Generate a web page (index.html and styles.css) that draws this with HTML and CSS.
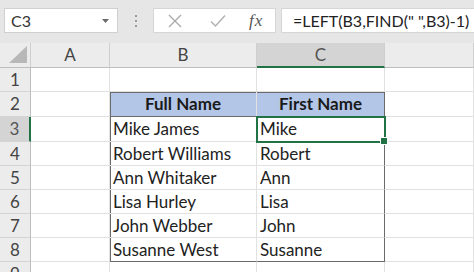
FILE: index.html
```html
<!DOCTYPE html>
<html>
    <head>
        <meta charset="utf-8">
        <title>LEFT + FIND</title>
        <link rel="stylesheet" href="styles.css">
    </head>
    <body>
        <!-- 编辑栏 -->
        <div class="bar">
            <div class="namebox">
                <span>C3</span>
                <svg class="drop" width="7" height="4" viewBox="0 0 7 4"><path d="M0 0h7L3.5 4z" fill="#6b6b6b"/></svg>
            </div>
            <div class="grip"><i></i><i></i><i></i></div>
            <div class="btns">
                <svg width="14" height="14" viewBox="0 0 14 14"><path d="M1 1l12 12M13 1L1 13" stroke="#a8a8a8" stroke-width="1.3" fill="none"/></svg>
                <svg width="16" height="14" viewBox="0 0 16 14"><path d="M1 7.5l4.5 4.5L15 1.5" stroke="#b0b0b0" stroke-width="1.4" fill="none"/></svg>
                <em class="fx">fx</em>
            </div>
            <div class="formula">=LEFT(B3,FIND(" ",B3)-1)</div>
        </div>

        <!-- 表格 -->
        <div class="sheet">
            <div class="hd corner"><svg width="18" height="17" viewBox="0 0 18 17"><path d="M18 0V17H0z" fill="#b8b8b8"/></svg></div>
            <div class="hd">A</div>
            <div class="hd">B</div>
            <div class="hd on-col">C</div>
            <div class="hd"></div>

            <div class="rh">1</div><div class="c"></div><div class="c"></div><div class="c"></div><div class="c"></div>

            <div class="rh">2</div><div class="c"></div>
            <div class="c th tl">Full Name</div>
            <div class="c th tr">First Name</div><div class="c"></div>

            <div class="rh on-row">3</div><div class="c"></div>
            <div class="c tl">Mike James</div>
            <div class="c tr sel">Mike</div><div class="c"></div>

            <div class="rh">4</div><div class="c"></div>
            <div class="c tl">Robert Williams</div>
            <div class="c tr">Robert</div><div class="c"></div>

            <div class="rh">5</div><div class="c"></div>
            <div class="c tl">Ann Whitaker</div>
            <div class="c tr">Ann</div><div class="c"></div>

            <div class="rh">6</div><div class="c"></div>
            <div class="c tl">Lisa Hurley</div>
            <div class="c tr">Lisa</div><div class="c"></div>

            <div class="rh">7</div><div class="c"></div>
            <div class="c tl">John Webber</div>
            <div class="c tr">John</div><div class="c"></div>

            <div class="rh">8</div><div class="c"></div>
            <div class="c tl tb">Susanne West</div>
            <div class="c tr tb">Susanne</div><div class="c"></div>

            <div class="rh">9</div><div class="c"></div><div class="c"></div><div class="c"></div><div class="c"></div>
        </div>
    </body>
</html>
```

FILE: styles.css
```css
*{
    margin: 0;
    padding: 0;
    box-sizing: border-box;
}
body{
    width: 474px;
    height: 272px;
    overflow: hidden;
    background: #fff;
    font-family: Lato, "Liberation Sans", sans-serif;
    color: #222;
}

/* 编辑栏 */
.bar{
    height: 43px;
    background: #e6e6e6;
    display: flex;
    align-items: flex-start;
    padding: 8px 0 0 4px;
}
.namebox{
    width: 114px;
    height: 25px;
    background: #fff;
    border: 1px solid #d0d0d0;
    display: flex;
    align-items: center;
    justify-content: space-between;
    padding: 0 8px 0 6px;
    font-size: 16px;
    color: #333;
}
.grip{
    width: 35px;
    height: 25px;
    display: flex;
    flex-direction: column;
    align-items: center;
    justify-content: center;
    gap: 3px;
}
.grip i{
    width: 2px;
    height: 2px;
    background: #9a9a9a;
}
.btns{
    width: 123px;
    height: 25px;
    background: #fff;
    border: 1px solid #d6d6d6;
    display: flex;
    align-items: center;
    padding: 0 0 0 14px;
}
.btns svg:nth-child(2){
    margin-left: 28px;
}
.fx{
    margin-left: 23px;
    font: italic 17px "Liberation Serif", serif;
    color: #555;
    letter-spacing: 1px;
}
.formula{
    flex: 1;
    margin-left: 5px;
    height: 25px;
    background: #fff;
    border: 1px solid #d6d6d6;
    border-right: none;
    padding-left: 11px;
    font-size: 16px;
    line-height: 23px;
    color: #222;
    white-space: nowrap;
}

/* 网格 */
.sheet{
    display: grid;
    grid-template-columns: 31px 79px 147px 128px 1fr;
    grid-template-rows: 25px 24px 25px 25px 24px 24px 24px 24px 24px 24px;
}
.hd{
    background: #ececec;
    border-right: 1px solid #cfcfcf;
    border-bottom: 1px solid #bdbdbd;
    text-align: center;
    font-size: 17px;
    line-height: 24px;
    color: #444;
}
.corner{
    display: flex;
    align-items: flex-end;
    justify-content: flex-end;
    padding: 0 3px 4px 0;
}
.on-col{
    background: #d4d4d4;
    border-bottom: 2px solid #217346;
    color: #555;
}
.rh{
    background: #ececec;
    border-right: 1px solid #bdbdbd;
    border-bottom: 1px solid #d4d4d4;
    text-align: center;
    font-size: 17px;
    line-height: 24px;
    color: #444;
}
.on-row{
    background: #d4d4d4;
    border-right: 2px solid #217346;
    color: #555;
}
.c{
    border-right: 1px solid #e1e1e1;
    border-bottom: 1px solid #e1e1e1;
    padding-left: 3px;
    font-size: 17px;
    line-height: 24px;
    white-space: nowrap;
}

/* 表格外框 */
.tl{
    box-shadow: inset 1px 0 #6a6a6a;
}
.tr{
    border-right-color: #6a6a6a;
}
.th{
    background: #b4c6e7;
    border-bottom-color: #6a6a6a;
    box-shadow: inset 0 1px #6a6a6a;
    text-align: center;
    padding: 0;
    font-weight: 700;
    color: #1a1a1a;
}
.th.tl{
    box-shadow: inset 1px 1px #6a6a6a;
}
.tb{
    border-bottom-color: #6a6a6a;
}

/* 选中单元格 */
.sel{
    position: relative;
    outline: 2px solid #217346;
    outline-offset: -1px;
    z-index: 1;
}
.sel::after{
    content: "";
    position: absolute;
    right: -4px;
    bottom: -4px;
    width: 6px;
    height: 6px;
    background: #217346;
    border: 1px solid #fff;
}
```
